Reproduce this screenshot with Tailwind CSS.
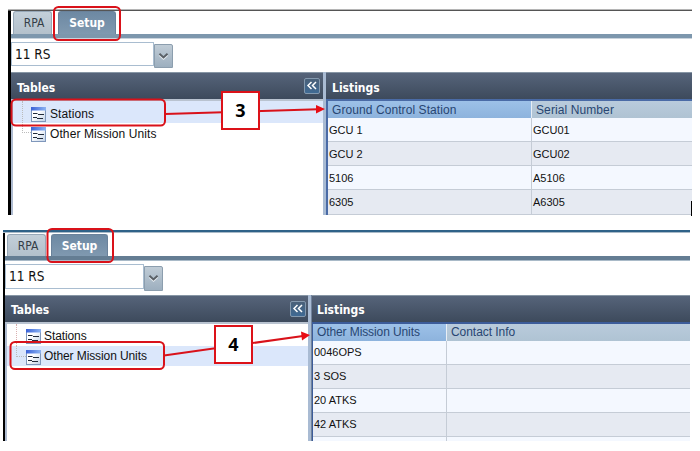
<!DOCTYPE html>
<html lang="en">
<head>
<meta charset="utf-8">
<title>Setup tables</title>
<script src="https://cdn.jsdelivr.net/npm/@tailwindcss/browser@4"></script>
</head>
<body class="bg-white">
<svg class="absolute h-0 w-0">
  <defs>
    <linearGradient id="bar" x1="0" x2="1"><stop offset="0" stop-color="#3a62d8"/><stop offset="1" stop-color="#8db4f2"/></linearGradient>
    <linearGradient id="sheet" x1="0" y1="0" x2="1" y2="1"><stop offset="0.4" stop-color="#fff"/><stop offset="1" stop-color="#bfd0e6"/></linearGradient>
    <linearGradient id="btn" x1="0" y1="0" x2="0" y2="1"><stop offset="0" stop-color="#4a6078"/><stop offset="1" stop-color="#3f6a94"/></linearGradient>
  </defs>
  <symbol id="form" viewBox="0 0 15 15">
    <rect x="0.5" y="0.5" width="14" height="14" fill="url(#sheet)" stroke="#7f97bb"/>
    <rect x="0" y="0" width="15" height="3.5" fill="url(#bar)"/>
    <path d="M2 6.5h4.5M7 7.5h6M2 10.5h4M6 11.5h6" stroke="#222c3c" stroke-width="1.2"/>
  </symbol>
  <symbol id="collapse" viewBox="0 0 16 16">
    <rect x="0.5" y="0.5" width="15" height="15" rx="1.5" fill="url(#btn)" stroke="#8499ae"/>
    <path d="M7.5 4L4 7.5L7.5 11M12 4L8.5 7.5L12 11" fill="none" stroke="#fff" stroke-width="1.5"/>
  </symbol>
  <symbol id="chevron" viewBox="0 0 12 10">
    <path d="M1.5 2.5L6 6.5L10.5 2.5" fill="none" stroke="#e8edf2" stroke-width="2" transform="translate(0 1)"/>
    <path d="M1.5 2L6 6L10.5 2" fill="none" stroke="#5a6066" stroke-width="2.2"/>
  </symbol>
</svg>

<div class="relative h-[451px] w-[700px] overflow-hidden font-['Liberation_Sans',sans-serif] text-[12px] text-[#111]">

  <!-- Stations panel -->
  <section class="ml-[8px] flex h-[215px] w-[684px] flex-col pt-[9px]">
    <div class="h-[2px] shrink-0 border-t border-[#b5b5b5] bg-[#555]"></div>
    <div class="flex min-h-0 flex-1 flex-col border-l-[3px] border-black">
      <div class="flex h-[27px] shrink-0 items-start gap-[6px] border-b-[4px] border-[#7d97ad] pl-[2px] font-['DejaVu_Sans_Condensed','DejaVu_Sans',sans-serif]">
        <div class="flex h-[23px] w-[39px] items-center justify-center rounded-t-[3px] border border-b-0 border-[#97a8b8] bg-linear-to-b from-[#c3cfd9] to-[#b3c0cb] pl-[3px] text-[12px] text-[#343d47]">RPA</div>
        <div class="flex h-[23px] w-[58px] items-center justify-center rounded-t-[3px] border border-b-0 border-[#6a829b] bg-linear-to-b from-[#6d89a3] to-[#8099b0] text-[12px] font-bold text-white">Setup</div>
      </div>
      <div class="flex h-[34px] shrink-0 items-start border-t border-[#c9d3dc] pt-[3px] font-['DejaVu_Sans_Condensed','DejaVu_Sans',sans-serif]">
        <div class="flex h-[24px] w-[143px] items-center border border-[#a9bdd0] bg-white pl-[3px] text-[13.5px]">11 RS</div>
        <div class="mt-[2px] flex h-[24px] w-[19px] items-center justify-center rounded-tr-[2px] border border-[#8c9eae] bg-linear-to-b from-[#c0ccd6] to-[#9dafbf]"><svg class="h-[9px] w-[11px]"><use href="#chevron"/></svg></div>
      </div>
      <div class="flex min-h-0 flex-1">
        <div class="flex w-[312px] flex-col">
          <div class="flex h-[27px] shrink-0 items-center justify-between border-t border-[#8796a5] bg-linear-to-b from-[#56647a] to-[#3d4a5c] pr-[3px] pl-[6px] font-['DejaVu_Sans_Condensed','DejaVu_Sans',sans-serif] font-bold text-white"><span class="mt-[3px]">Tables</span><svg class="h-[16px] w-[16px]"><use href="#collapse"/></svg></div>
          <div class="flex-1 border-t-2 border-l-2 border-t-[#b9c3d0] border-l-[#aebbd0] bg-white">
            <div class="flex h-[22px] items-center bg-[#dbe7fb] pl-[9px]">
              <span class="h-full w-[9px] border-l border-dotted border-[#bbb]"></span><svg class="mt-[4px] h-[15px] w-[15px]"><use href="#form"/></svg><span class="mt-[4px] ml-[4px] tracking-[0.1px]">Stations</span>
            </div>
            <div class="flex h-[20px] items-center pl-[9px]">
              <span class="-mt-[1px] h-[11px] w-[9px] self-start border-b border-l border-dotted border-[#bbb]"></span><svg class="mt-[2px] h-[15px] w-[15px]"><use href="#form"/></svg><span class="mt-[1px] ml-[4px] tracking-[0.1px]">Other Mission Units</span>
            </div>
          </div>
        </div>
        <div class="w-[3px] bg-[#a9bbd3]"></div>
        <div class="flex flex-1 flex-col">
          <div class="flex h-[27px] shrink-0 items-center border-t border-[#8796a5] bg-linear-to-b from-[#56647a] to-[#3d4a5c] pl-[6px] font-['DejaVu_Sans_Condensed','DejaVu_Sans',sans-serif] font-bold text-white"><span class="mt-[3px]">Listings</span></div>
          <div class="grid flex-1 grid-cols-[204px_1fr] grid-rows-[17px_24px_24px_24px_25px] border-t-2 border-l-2 border-[#4a6ba6] text-[11px]">
            <div class="flex items-center border-r border-[#e8eef5] bg-linear-to-b from-[#9dc1e8] to-[#8db3dd] pl-[4px] text-[12px] tracking-[0.08px] text-[#284672]">Ground Control Station</div>
            <div class="flex items-center bg-linear-to-b from-[#b9cbdc] to-[#afc3d3] pl-[4px] text-[12px] tracking-[0.1px] text-[#284672]">Serial Number</div>
            <div class="flex items-center border-r border-b border-[#c5ccd6] bg-[#f4f8ff] pt-[2px] pl-[1px]">GCU 1</div><div class="flex items-center border-b border-[#c5ccd6] bg-[#f4f8ff] pt-[2px] pl-[1px]">GCU01</div>
            <div class="flex items-center border-r border-b border-[#c5ccd6] bg-[#e6eaf2] pt-[2px] pl-[1px]">GCU 2</div><div class="flex items-center border-b border-[#c5ccd6] bg-[#e6eaf2] pt-[2px] pl-[1px]">GCU02</div>
            <div class="flex items-center border-r border-b border-[#c5ccd6] bg-[#f4f8ff] pt-[2px] pl-[1px]">5106</div><div class="flex items-center border-b border-[#c5ccd6] bg-[#f4f8ff] pt-[2px] pl-[1px]">A5106</div>
            <div class="flex items-center border-r border-b border-[#c5ccd6] bg-[#e6eaf2] pl-[1px]">6305</div><div class="flex items-center border-b border-[#c5ccd6] bg-[#e6eaf2] pl-[1px]">A6305</div>
          </div>
        </div>
      </div>
    </div>
  </section>

  <!-- Other Mission Units panel -->
  <section class="mt-[15px] ml-[3px] flex h-[211px] w-[687px] flex-col">
    <div class="h-[3px] shrink-0 border-b border-[#a9bac8] bg-[#2f6288]"></div>
    <div class="flex min-h-0 flex-1 flex-col border-l-[2px] border-black">
      <div class="flex h-[27px] shrink-0 items-start gap-[5px] border-b-[4px] border-[#647d93] pt-[1px] pl-[2px] font-['DejaVu_Sans_Condensed','DejaVu_Sans',sans-serif]">
        <div class="flex h-[22px] w-[39px] items-center justify-center rounded-t-[3px] border border-b-0 border-[#97a8b8] bg-linear-to-b from-[#c3cfd9] to-[#b3c0cb] pl-[3px] text-[12px] text-[#343d47]">RPA</div>
        <div class="flex h-[22px] w-[57px] items-center justify-center rounded-t-[3px] border border-b-0 border-[#6a829b] bg-linear-to-b from-[#6d89a3] to-[#8099b0] text-[12px] font-bold text-white">Setup</div>
      </div>
      <div class="flex h-[35px] shrink-0 items-start border-t border-[#a9bac8] pt-[3px] font-['DejaVu_Sans_Condensed','DejaVu_Sans',sans-serif]">
        <div class="flex h-[25px] w-[139px] items-center border border-[#a9bdd0] bg-white pl-[3px] text-[13.5px]">11 RS</div>
        <div class="mt-[2px] flex h-[25px] w-[19px] items-center justify-center rounded-tr-[2px] border border-[#8c9eae] bg-linear-to-b from-[#c0ccd6] to-[#9dafbf]"><svg class="h-[9px] w-[11px]"><use href="#chevron"/></svg></div>
      </div>
      <div class="flex min-h-0 flex-1">
        <div class="flex w-[303px] flex-col">
          <div class="flex h-[27px] shrink-0 items-center justify-between border-t border-[#8796a5] bg-linear-to-b from-[#56647a] to-[#3d4a5c] pr-[2px] pl-[6px] font-['DejaVu_Sans_Condensed','DejaVu_Sans',sans-serif] font-bold text-white"><span class="mt-[2px]">Tables</span><svg class="h-[16px] w-[16px]"><use href="#collapse"/></svg></div>
          <div class="flex-1 border-t-2 border-l-2 border-t-[#b9c3d0] border-l-[#aebbd0] bg-white">
            <div class="flex h-[22px] items-center pl-[9px]">
              <span class="h-full w-[10px] border-l border-dotted border-[#d9b0b0]"></span><svg class="mt-[3px] h-[15px] w-[15px]"><use href="#form"/></svg><span class="mt-[2px] ml-[3px] tracking-[-0.1px]">Stations</span>
            </div>
            <div class="flex h-[20px] items-center bg-[#dbe7fb] pl-[9px]">
              <span class="h-[11px] w-[10px] self-start border-b border-l border-dotted border-[#bbb]"></span><svg class="mt-[2px] h-[15px] w-[15px]"><use href="#form"/></svg><span class="ml-[3px] tracking-[-0.1px]">Other Mission Units</span>
            </div>
          </div>
        </div>
        <div class="w-[4px] border-r-[1px] border-[#71839c] bg-[#a9bbd3]"></div>
        <div class="flex flex-1 flex-col">
          <div class="flex h-[27px] shrink-0 items-center border-t border-[#8796a5] bg-linear-to-b from-[#56647a] to-[#3d4a5c] pl-[5px] font-['DejaVu_Sans_Condensed','DejaVu_Sans',sans-serif] font-bold text-white"><span class="mt-[2px]">Listings</span></div>
          <div class="grid flex-1 grid-cols-[134px_1fr] grid-rows-[17px_24px_24px_24px_24px_4px] overflow-hidden border-t-2 border-l border-[#3c5c9a] text-[11px]">
            <div class="flex items-center border-r border-[#e8eef5] bg-linear-to-b from-[#9dc1e8] to-[#8db3dd] pb-[2px] pl-[4px] text-[12px] tracking-[-0.1px] text-[#284672]">Other Mission Units</div>
            <div class="flex items-center bg-linear-to-b from-[#b9cbdc] to-[#afc3d3] pb-[2px] pl-[4px] text-[12px] tracking-[-0.05px] text-[#284672]">Contact Info</div>
            <div class="flex items-center border-r border-b border-[#c5ccd6] bg-[#f4f8ff] pl-[1px]">0046OPS</div><div class="border-b border-[#c5ccd6] bg-[#f4f8ff]"></div>
            <div class="flex items-center border-r border-b border-[#c5ccd6] bg-[#e6eaf2] pl-[1px]">3 SOS</div><div class="border-b border-[#c5ccd6] bg-[#e6eaf2]"></div>
            <div class="flex items-center border-r border-b border-[#c5ccd6] bg-[#f4f8ff] pl-[1px]">20 ATKS</div><div class="border-b border-[#c5ccd6] bg-[#f4f8ff]"></div>
            <div class="flex items-center border-r border-b border-[#c5ccd6] bg-[#e6eaf2] pl-[1px]">42 ATKS</div><div class="border-b border-[#c5ccd6] bg-[#e6eaf2]"></div>
            <div class="border-r border-[#c5ccd6] bg-[#f4f8ff]"></div><div class="bg-[#f4f8ff]"></div>
          </div>
        </div>
      </div>
    </div>
  </section>

  <!-- Callouts -->
  <svg class="absolute inset-0 h-[451px] w-[700px]" viewBox="0 0 700 451" fill="none">
    <g stroke="#d9121a" stroke-width="2">
      <rect x="54" y="7" width="66" height="33" rx="4.5"/>
      <rect x="11.5" y="99.5" width="153.5" height="26" rx="4.5"/>
      <rect x="47.5" y="229" width="65.5" height="33" rx="4.5"/>
      <rect x="10.5" y="342" width="153.5" height="27" rx="4.5"/>
      <path d="M165 114L318 109.2M164 355.5L303 336"/>
    </g>
    <path d="M316 105L325 109L316 113.5ZM301 331.5L310 335L302 340.5Z" fill="#e80c14"/>
    <path d="M691.5 201V216" stroke="#000"/>
  </svg>
  <div class="absolute top-[91px] left-[221px] flex h-[39px] w-[39px] items-center justify-center border-2 border-[#dc1219] bg-white pb-[1px] font-['Noto_Sans',sans-serif] text-[18px] font-bold text-black">3</div>
  <div class="absolute top-[325px] left-[214px] flex h-[39px] w-[39px] items-center justify-center border-2 border-[#dc1219] bg-white pb-[1px] font-['Noto_Sans',sans-serif] text-[18px] font-bold text-black">4</div>
</div>
</body>
</html>
